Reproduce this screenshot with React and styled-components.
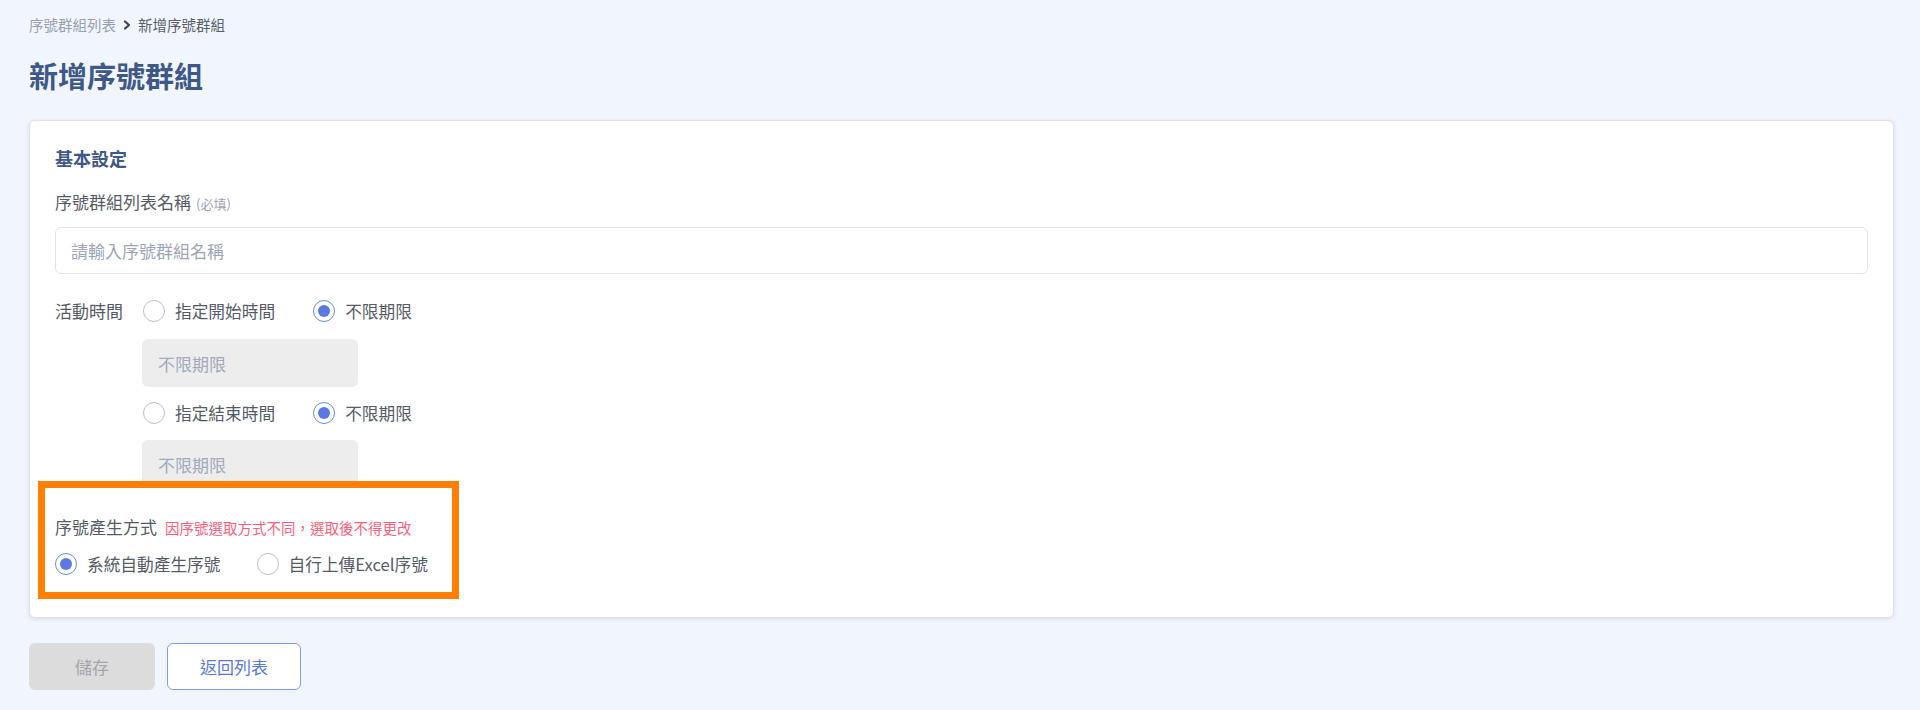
import React, { useState } from 'react';
import styled, { createGlobalStyle } from 'styled-components';

const GlobalStyle = createGlobalStyle`
  html, body {
    margin: 0;
    padding: 0;
    background-color: #f1f5fd;
    font-family: "Noto Sans CJK TC", "Noto Sans", sans-serif;
    color: #555b66;
  }
  * { box-sizing: border-box; }
`;

const Page = styled.div`
  padding: 15px 26px 20px 29px;
  min-height: 710px;
`;

const Breadcrumb = styled.div`
  display: flex;
  align-items: center;
  gap: 6px;
  font-size: 14.5px;
  line-height: 20px;
`;

const Crumb = styled.span`
  color: ${(p) => (p.current ? '#5a5f68' : '#97a0b2')};
`;

const Chevron = styled.svg`
  width: 10px;
  height: 10px;
`;

const Title = styled.h1`
  margin: 20px 0 0;
  font-size: 29px;
  line-height: 40px;
  font-weight: 700;
  color: #3f5888;
`;

const Card = styled.div`
  margin-top: 25px;
  background: #fff;
  border: 1px solid #dde1e8;
  border-radius: 6px;
  box-shadow: 0 1px 4px rgba(60, 70, 90, 0.14);
  padding: 25px;
`;

const SectionTitle = styled.h2`
  margin: 0;
  font-size: 18px;
  line-height: 24px;
  font-weight: 700;
  color: #3f5888;
`;

const Label = styled.div`
  margin-top: 20px;
  font-size: 17px;
  line-height: 24px;
  color: #555b66;
`;

const Hint = styled.span`
  margin-left: ${(p) => (p.danger ? 8 : 5)}px;
  font-size: ${(p) => (p.danger ? 14.5 : 13)}px;
  color: ${(p) => (p.danger ? '#ff5f7e' : '#9aa3b5')};
`;

const TextInput = styled.input`
  display: block;
  width: 100%;
  height: 47px;
  margin-top: 11px;
  padding: 0 15px;
  border: 1px solid #dde3f1;
  border-radius: 6px;
  font-family: inherit;
  font-size: 17px;
  color: #555b66;
  outline: none;
  &::placeholder {
    color: #9ca5b8;
  }
`;

const TimeGrid = styled.div`
  display: grid;
  grid-template-columns: auto auto;
  justify-content: start;
  column-gap: 20px;
  margin-top: 25px;
`;

const TimeBlock = styled.div`
  display: flex;
  flex-direction: column;
  grid-column: 2;
  grid-row: 1;
`;

const RadioRow = styled.div`
  display: flex;
  align-items: center;
  gap: ${(p) => p.gap || 38}px;
  margin-top: ${(p) => p.top || 0}px;
  height: 24px;
`;

const Option = styled.label`
  display: flex;
  align-items: center;
  gap: ${(p) => p.gap || 10}px;
  font-size: 16.7px;
  line-height: 24px;
  color: #555b66;
  cursor: pointer;
`;

const Circle = styled.span`
  width: 22px;
  height: 22px;
  border-radius: 50%;
  border: 1.5px solid ${(p) => (p.checked ? '#6d89ea' : '#b8bfcd')};
  display: flex;
  align-items: center;
  justify-content: center;
  background: #fff;
  flex-shrink: 0;
  &::after {
    content: '';
    width: 12px;
    height: 12px;
    border-radius: 50%;
    background: #5b79e3;
    display: ${(p) => (p.checked ? 'block' : 'none')};
  }
`;

const DisabledBox = styled.div`
  width: 216px;
  height: 48px;
  margin-top: ${(p) => p.top}px;
  margin-left: -1px;
  background: #ededed;
  border-radius: 6px;
  padding: 0 16px;
  display: flex;
  align-items: center;
  font-size: 17px;
  color: #a2aaba;
`;

const FieldLabel = styled.div`
  font-size: 17px;
  line-height: 24px;
  color: #555b66;
  height: 24px;
`;

const Highlight = styled.div`
  width: fit-content;
  margin-left: -10px;
  padding: 27px 24px 16px 10px;
  outline: 7px solid #ff7f00;
`;

const MethodLabel = styled.div`
  display: flex;
  align-items: baseline;
  font-size: 17px;
  line-height: 24px;
  color: #555b66;
`;

const Actions = styled.div`
  display: flex;
  gap: 12px;
  margin-top: 25px;
`;

const Button = styled.button`
  height: 47px;
  width: ${(p) => p.w}px;
  border-radius: 6px;
  font-family: inherit;
  font-size: 17px;
  cursor: pointer;
  background: ${(p) => (p.outline ? '#fff' : '#dcdcdc')};
  color: ${(p) => (p.outline ? '#5b78e0' : '#a3a6ad')};
  border: ${(p) => (p.outline ? '1.5px solid #7f9bf0' : 'none')};
`;

const Radio = ({ checked, label, gap, onClick }) => (
  <Option gap={gap} onClick={onClick}>
    <Circle checked={checked} />
    {label}
  </Option>
);

export default function App() {
  const [start, setStart] = useState('none');
  const [end, setEnd] = useState('none');
  const [method, setMethod] = useState('auto');

  return (
    <>
      <GlobalStyle />
      <Page>
        <Breadcrumb>
          <Crumb>序號群組列表</Crumb>
          <Chevron viewBox="0 0 10 10">
            <path d="M3 1.5 L7 5 L3 8.5" fill="none" stroke="#3f444c" strokeWidth="2.2" strokeLinecap="round" strokeLinejoin="round" />
          </Chevron>
          <Crumb current>新增序號群組</Crumb>
        </Breadcrumb>
        <Title>新增序號群組</Title>

        <Card>
          <SectionTitle>基本設定</SectionTitle>
          <Label>
            序號群組列表名稱<Hint>(必填)</Hint>
          </Label>
          <TextInput placeholder="請輸入序號群組名稱" />

          <TimeGrid>
            <FieldLabel>活動時間</FieldLabel>
            <TimeBlock>
              <RadioRow>
                <Radio checked={start === 'set'} label="指定開始時間" onClick={() => setStart('set')} />
                <Radio checked={start === 'none'} label="不限期限" onClick={() => setStart('none')} />
              </RadioRow>
              <DisabledBox top={16}>不限期限</DisabledBox>
              <RadioRow top={14}>
                <Radio checked={end === 'set'} label="指定結束時間" onClick={() => setEnd('set')} />
                <Radio checked={end === 'none'} label="不限期限" onClick={() => setEnd('none')} />
              </RadioRow>
              <DisabledBox top={15}>不限期限</DisabledBox>
            </TimeBlock>
          </TimeGrid>

          <Highlight>
            <MethodLabel>
              序號產生方式<Hint danger>因序號選取方式不同，選取後不得更改</Hint>
            </MethodLabel>
            <RadioRow top={12} gap={36}>
              <Radio checked={method === 'auto'} label="系統自動產生序號" onClick={() => setMethod('auto')} />
              <Radio checked={method === 'excel'} label="自行上傳Excel序號" onClick={() => setMethod('excel')} />
            </RadioRow>
          </Highlight>
        </Card>

        <Actions>
          <Button w={126} disabled>儲存</Button>
          <Button w={134} outline>返回列表</Button>
        </Actions>
      </Page>
    </>
  );
}
